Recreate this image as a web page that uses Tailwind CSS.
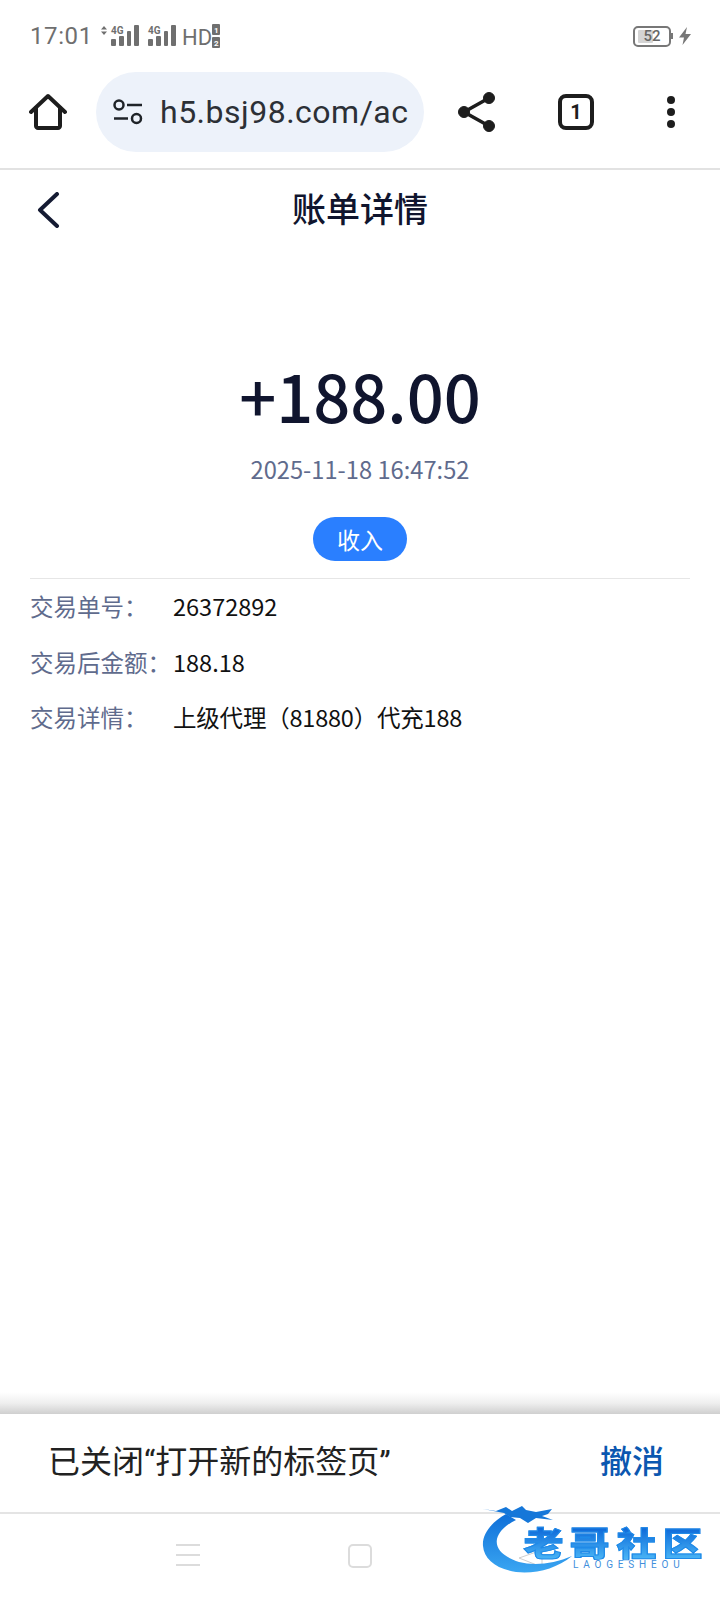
<!DOCTYPE html>
<html lang="zh-CN">
<head>
  <meta charset="UTF-8" />
  <title>账单详情</title>
  <script src="https://cdn.jsdelivr.net/npm/@tailwindcss/browser@4"></script>
</head>
<body class="bg-white">
  <div class="relative w-[720px] h-[1600px] overflow-hidden flex flex-col bg-white font-['Noto_Sans_CJK_SC',sans-serif]">

    <!-- Status bar -->
    <div class="h-[72px] shrink-0 flex items-center justify-between pl-[30px] pr-[29px] text-[#6f6f6f] font-['Roboto',sans-serif]">
      <div class="flex items-center">
        <span class="text-[24px] leading-none tracking-[0.6px]">17:01</span>
        <svg class="ml-[7px]" width="122" height="26" viewBox="0 0 122 26" fill="#6f6f6f">
          <path d="M1 6.500 4 3 7 6.500ZM1 8.500 4 12 7 8.500Z"/>
          <text x="11" y="11" font-family="Roboto" font-size="10" font-weight="700">4G</text>
          <rect x="11" y="16" width="5" height="7" rx="1"/><rect x="19" y="13" width="5" height="10" rx="1"/><rect x="27" y="8" width="4" height="15" rx="1"/><rect x="34" y="2" width="5" height="21" rx="1"/>
          <text x="48" y="11" font-family="Roboto" font-size="10" font-weight="700">4G</text>
          <rect x="48" y="16" width="5" height="7" rx="1"/><rect x="56" y="13" width="5" height="10" rx="1"/><rect x="64" y="8" width="4" height="15" rx="1"/><rect x="71" y="2" width="5" height="21" rx="1"/>
          <text x="82" y="22" font-family="Roboto" font-size="22">HD</text>
          <rect x="112" y="1" width="8" height="11" rx="1"/><rect x="112" y="14" width="8" height="11" rx="1"/>
          <text x="114" y="10" font-family="Roboto" font-size="8" font-weight="700" fill="#fff">1</text>
          <text x="114" y="23" font-family="Roboto" font-size="8" font-weight="700" fill="#fff">2</text>
        </svg>
      </div>
      <div class="flex items-center">
        <div class="relative w-[38px] h-[21px] border-2 border-[#777] rounded-[5px] flex items-center justify-center">
          <div class="absolute left-[3px] top-[2px] bottom-[2px] w-[15px] bg-[#d4d4d4] rounded-[1px]"></div>
          <span class="relative text-[15px] leading-none text-[#666] font-medium">52</span>
        </div>
        <div class="w-[2px] h-[6px] bg-[#777] mr-[6px]"></div>
        <svg width="12" height="18" viewBox="0 0 12 18" fill="#777"><path d="M8 0 0 10.500H5L3.500 18 12 7H6.500Z"/></svg>
      </div>
    </div>

    <!-- Browser toolbar -->
    <div class="h-[98px] shrink-0 border-b-2 border-[#e2e2e2] pb-[16px] flex items-center">
      <div class="w-[96px] shrink-0 flex justify-center">
        <svg width="38" height="38" viewBox="0 0 38 38" fill="none" stroke="#1d1d1d" stroke-width="4" stroke-linejoin="round" stroke-linecap="round"><path d="M2 19 19 3 36 19"/><path d="M7 15V33C7 34 8 35 9 35H29C30 35 31 34 31 33V15"/></svg>
      </div>
      <div class="w-[328px] h-[80px] shrink-0 rounded-full bg-[#edf2fa] flex items-center pl-[17px] pr-[14px]">
        <svg class="shrink-0" width="30" height="26" viewBox="0 0 30 26" fill="none" stroke="#1f2328" stroke-width="2.500"><circle cx="6" cy="6" r="4.500"/><path d="M14 6H29"/><path d="M1 19.500H15"/><circle cx="23.500" cy="19.500" r="4.500"/></svg>
        <div class="ml-[17px] whitespace-nowrap font-['Roboto',sans-serif] text-[32px] leading-none text-[#2c3036] tracking-[0.5px]">h5.bsj98.com/ac</div>
      </div>
      <div class="flex-1 flex items-center">
        <div class="w-[106px] flex justify-center">
          <svg width="38" height="40" viewBox="0 0 38 40" fill="#1d1d1d" stroke="#1d1d1d"><circle cx="31" cy="6" r="5.500"/><circle cx="6" cy="20" r="5.500"/><circle cx="31" cy="34" r="5.500"/><path d="M31 6 6 20 31 34" fill="none" stroke-width="3.500"/></svg>
        </div>
        <div class="w-[92px] flex justify-center">
          <div class="w-[36px] h-[36px] border-[4px] border-[#1d1d1d] rounded-[8px] flex items-center justify-center font-['Roboto',sans-serif] font-bold text-[20px] leading-none text-[#1d1d1d]">1</div>
        </div>
        <div class="flex-1 flex flex-col items-center gap-[4px]">
          <div class="w-[8px] h-[8px] rounded-full bg-[#1d1d1d]"></div>
          <div class="w-[8px] h-[8px] rounded-full bg-[#1d1d1d]"></div>
          <div class="w-[8px] h-[8px] rounded-full bg-[#1d1d1d]"></div>
        </div>
      </div>
    </div>

    <!-- Page header -->
    <div class="relative h-[80px] shrink-0 flex items-center justify-center pb-[4px]">
      <svg class="absolute left-[36px] top-[22px]" width="24" height="36" viewBox="0 0 24 36" fill="none" stroke="#151b33" stroke-width="4" stroke-linecap="round" stroke-linejoin="round"><path d="M21 2 4 18 21 34"/></svg>
      <h1 class="text-[34px] leading-none text-[#10152e] font-medium">账单详情</h1>
    </div>

    <!-- Amount -->
    <div class="flex-1 px-[30px]">
      <div class="pt-[101px] flex flex-col items-center">
        <div class="h-[88px] flex items-center text-[65px] leading-none font-medium text-[#10152e]">+188.00</div>
        <div class="mt-[12px] text-[23.700px] leading-[36px] text-[#5f6b8d]">2025-11-18 16:47:52</div>
        <div class="mt-[30px] w-[94px] h-[44px] rounded-full bg-[#2a7fff] flex items-center justify-center text-[23px] leading-none text-white">收入</div>
      </div>
      <div class="mt-[17px] border-t border-[#e6e6e6] pt-[9px] flex flex-col gap-[19.500px] text-[23.500px] leading-[36px]">
        <div class="flex"><span class="w-[143px] shrink-0 whitespace-nowrap text-[#5f6b8d]">交易单号：</span><span class="text-[#111]">26372892</span></div>
        <div class="flex"><span class="w-[143px] shrink-0 whitespace-nowrap text-[#5f6b8d]">交易后金额：</span><span class="text-[#111]">188.18</span></div>
        <div class="flex"><span class="w-[143px] shrink-0 whitespace-nowrap text-[#5f6b8d]">交易详情：</span><span class="text-[#111] tracking-[-0.2px]">上级代理（81880）代充188</span></div>
      </div>
    </div>

    <!-- Snackbar -->
    <div class="h-[22px] shrink-0 bg-gradient-to-b from-white via-[#efefef] to-[#cfcfcf]"></div>
    <div class="h-[100px] shrink-0 border-b-2 border-[#e4e4e4] flex items-center justify-between pl-[48px] pr-[56px] pb-[3px] font-['Roboto','Noto_Sans_CJK_SC',sans-serif]">
      <span class="text-[32px] leading-none text-[#222]">已关闭“打开新的标签页”</span>
      <span class="text-[32px] leading-none text-[#0b57b0] font-medium">撤消</span>
    </div>

    <!-- Navigation bar -->
    <div class="h-[86px] shrink-0 relative flex items-start pt-[30px] pl-[176px]">
      <div class="w-[24px] h-[22px] flex flex-col justify-between">
        <div class="h-[2px] bg-[#dcdcdc]"></div>
        <div class="h-[2px] bg-[#dcdcdc]"></div>
        <div class="h-[2px] bg-[#dcdcdc]"></div>
      </div>
      <div class="ml-[148px] w-[24px] h-[24px] border-2 border-[#dcdcdc] rounded-[5px]"></div>
    </div>

    <!-- Watermark -->
    <div class="absolute left-[482px] top-[1503px] w-[226px] h-[76px]">
      <svg class="absolute left-0 top-0" width="226" height="76" viewBox="0 0 226 76">
        <defs>
          <linearGradient id="swoosh" x1="0" y1="0" x2="0" y2="1"><stop offset="0" stop-color="#0f6fd8"/><stop offset="1" stop-color="#3aa6f2"/></linearGradient>
        </defs>
        <path d="M37 55 60 47V64Z" fill="none" stroke="#cfcfcf" stroke-width="1"/>
        <path d="M24 11C8 20 0 32 1 43C2 56 14 66 34 69C54 71 74 66 90 53C72 61 52 63 37 59C22 54 13 46 15 36C17 28 24 22 34 17Z" fill="url(#swoosh)"/>
        <path d="M1 6 14 8 24 4 30 8 40 3 44 7 54 9 70 6 66 11 60 13 71 17 54 15 46 20 38 15 28 14 22 10Z" fill="#1577d9"/>
      </svg>
      <div class="absolute left-[43.500px] top-[23px] w-[175px] flex justify-between text-[33px] leading-[33px] font-black [-webkit-text-stroke:1px_#1f8ae8]">
        <span class="w-[35px] text-center scale-x-[1.200] text-transparent bg-clip-text bg-gradient-to-b from-[#0b63d6] to-[#49b4f5]">老</span>
        <span class="w-[35px] text-center scale-x-[1.200] text-transparent bg-clip-text bg-gradient-to-b from-[#0b63d6] to-[#49b4f5]">哥</span>
        <span class="w-[35px] text-center scale-x-[1.200] text-transparent bg-clip-text bg-gradient-to-b from-[#0b63d6] to-[#49b4f5]">社</span>
        <span class="w-[35px] text-center scale-x-[1.200] text-transparent bg-clip-text bg-gradient-to-b from-[#0b63d6] to-[#49b4f5]">区</span>
      </div>
      <div class="absolute left-[91px] top-[57px] font-['Roboto',sans-serif] text-[10px] leading-none tracking-[4.800px] text-[#3f8fdc]">LAOGESHEOU</div>
    </div>
  </div>
</body>
</html>
